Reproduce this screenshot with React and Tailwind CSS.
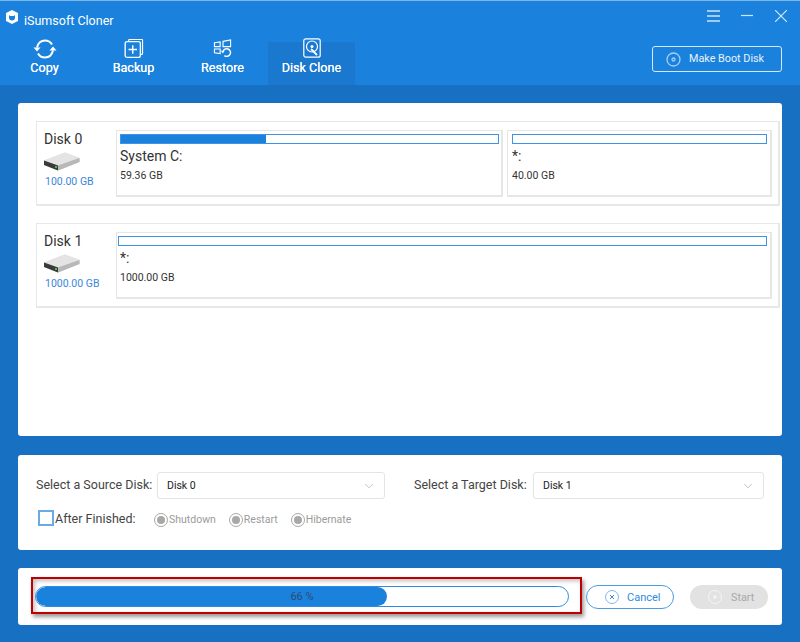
import { ChevronDown } from 'lucide-react';

function CopyIcon() {
  return (
    <svg width="24" height="20" viewBox="0 1 24 20" fill="none" stroke="white" strokeWidth="2">
      <path d="M4 9.500C5 5.500 8 2.500 12 2.500c3 0 5.500 1.400 7 4" />
      <path d="M20 12.500C19 16.500 16 19.500 12 19.500c-3 0-5.500-1.400-7-4" />
      <path d="M0.500 9.500h7l-3.500 4z" fill="white" stroke="none" />
      <path d="M23.500 12.500h-7l3.500-4z" fill="white" stroke="none" />
    </svg>
  );
}

function BackupIcon() {
  return (
    <svg width="20" height="19" viewBox="0 0 20 20" fill="none" stroke="white" strokeWidth="1.200">
      <path d="M4.500 2.500V1.200a.7.7 0 0 1 .7-.7h13a.7.7 0 0 1 .8.7v14a1 1 0 0 1-.8 1h-1" />
      <rect x="0.700" y="2.800" width="16" height="16.500" rx="2" strokeWidth="1.400" />
      <path d="M8.700 6.500v9M4.200 11h9" strokeWidth="1.500" />
    </svg>
  );
}

function RestoreIcon() {
  return (
    <svg width="20" height="18" viewBox="0 0 20 19" fill="none" stroke="white" strokeWidth="1.200">
      <path d="M1 4l6-1v5H1zM10 2.500l8-1.500v7h-8zM1 10.500h6v5l-6-1z" />
      <path d="M10 13.500a4 4 0 1 1 1.500 4" strokeWidth="1.500" />
      <path d="M7.800 12.500h4l-2 2.800z" fill="white" stroke="none" />
    </svg>
  );
}

function CloneIcon() {
  return (
    <svg width="18" height="20" viewBox="0 0 18 20" fill="none" stroke="white" strokeWidth="1.200" className="-mt-px">
      <rect x="0.800" y="0.800" width="16.400" height="18.400" rx="2" />
      <circle cx="9" cy="8.500" r="5.500" />
      <circle cx="9" cy="8.500" r="1.500" fill="white" stroke="none" />
      <path d="M8 11l6 6" strokeWidth="1.800" />
    </svg>
  );
}

function DriveIcon() {
  return (
    <svg width="36" height="19" viewBox="0 0 36 19">
      <path d="M0 8.500L21 0.500 35.500 6 35.500 10 14 18.500 0 13z" fill="#d4d4d4" />
      <path d="M0 8.500L21 0.500 35.500 6 14 13.500z" fill="#e4e4e4" />
      <path d="M0 8.500L14 13.500V18.500L0 13z" fill="#3a3a3a" />
      <path d="M14 13.500L35.500 6V10L14 18.500z" fill="#b8b8b8" />
      <rect x="11" y="14" width="2" height="2" fill="#35c64a" />
    </svg>
  );
}

function Bar({ fill, className }) {
  return (
    <div className={`h-[10px] border border-[#3d94e4] bg-white ${className}`}>
      {fill && <div className="h-full bg-[#1a82dd]" style={{ width: `${fill}%` }} />}
    </div>
  );
}

function Partition({ name, size, fill, className, barClass = '' }) {
  return (
    <div className={`h-[67px] border-2 border-t border-l border-[#e6e6e6] pt-[3px] ${className}`}>
      <Bar fill={fill} className={barClass} />
      <div className="mt-[2px] h-[20px] text-[14px] leading-[20px] text-[#333]">{name}</div>
      <div className="mt-[3px] text-[10.500px] leading-[14px] text-[#333]">{size}</div>
    </div>
  );
}

function DiskRow({ name, size, children }) {
  return (
    <div className="flex h-[85px] border-2 border-t border-l border-[#e8e8e8] pl-[7px] pt-[8px] pr-[7px]">
      <div className="w-[72px] shrink-0">
        <div className="text-[14px] leading-[18px] text-[#333]">{name}</div>
        <div className="mt-[4px]"><DriveIcon /></div>
        <div className="mt-[4px] pl-px text-[10.500px] leading-[14px] text-[#3b87d9]">{size}</div>
      </div>
      <div className="flex flex-1 gap-[3px]">{children}</div>
    </div>
  );
}

function Select({ value, className }) {
  return (
    <div className={`flex h-[27px] items-center justify-between rounded-[3px] border border-[#e4e4e4] pl-[9px] pr-[8px] ${className}`}>
      <span className="pt-px text-[10.500px] text-[#222]">{value}</span>
      <ChevronDown size={14} strokeWidth={1} className="text-[#999]" />
    </div>
  );
}

function Radio({ label }) {
  return (
    <div className="flex items-center gap-[1px]">
      <span className="flex h-[14px] w-[14px] items-center justify-center rounded-full border border-[#a8a8a8]">
        <span className="h-[8px] w-[8px] rounded-full bg-[#a8a8a8]" />
      </span>
      <span className="text-[10.500px] text-[#9b9b9b]">{label}</span>
    </div>
  );
}

function Tab({ icon, label, active }) {
  return (
    <div className={`mx-px flex w-[87px] flex-col items-center ${active ? 'bg-[#1a78cf]' : ''}`}>
      <div className="-mt-[3px] flex h-[20px] items-start">{icon}</div>
      <div className="mt-px text-[12.600px] leading-[16px] text-white [text-shadow:0_0_0.4px_white]">{label}</div>
    </div>
  );
}

export default function App() {
  return (
    <div className="flex h-[642px] w-[800px] flex-col overflow-hidden bg-[#1770c2] font-['Roboto',sans-serif]">
      <header className="flex h-[85px] shrink-0 justify-between border-t border-[#7fb6ea] bg-[#1a82dd]">
        <div className="flex flex-col">
          <div className="flex h-[41px] items-start pl-[6px] pt-[9px]">
            <svg width="12" height="14" viewBox="0 0 12 14" className="shrink-0">
              <path d="M6 0l6 3v8l-6 3-6-3V3z" fill="white" />
              <path d="M3 5v2.500a3 3 0 0 0 6 0V5L8 6H4z" fill="#1a82dd" />
            </svg>
            <span className="ml-[6px] mt-[2px] text-[12.500px] leading-[18px] text-white">iSumsoft Cloner</span>
          </div>
          <nav className="flex flex-1">
            <Tab icon={<CopyIcon />} label="Copy" />
            <Tab icon={<BackupIcon />} label="Backup" />
            <Tab icon={<RestoreIcon />} label="Restore" />
            <Tab icon={<CloneIcon />} label="Disk Clone" active />
          </nav>
        </div>
        <div className="flex flex-col items-end pr-[13px]">
          <div className="flex h-[45px] items-start gap-[21px] pt-[9px]">
            <svg width="13" height="12" viewBox="0 0 13 12" stroke="#cfe5fa" strokeWidth="1.300">
              <path d="M0 1h13M0 6h13M0 11h13" />
            </svg>
            <svg width="12" height="12" viewBox="0 0 12 12" stroke="#cfe5fa" strokeWidth="1.200">
              <path d="M0 5.500h12" />
            </svg>
            <svg width="12" height="12" viewBox="0 0 12 12" stroke="#dcecfb" strokeWidth="1.100" className="ml-px">
              <path d="M0 0l12 12M12 0L0 12" />
            </svg>
          </div>
          <div className="mr-[5px] flex h-[26px] w-[130px] items-center rounded-[3px] border border-[#d6e9fb] pl-[13px]">
            <svg width="15" height="15" viewBox="0 0 15 15" fill="none" stroke="#a8cff3" strokeWidth="1.300">
              <circle cx="7.500" cy="7.500" r="6.500" />
              <circle cx="7.500" cy="7.500" r="1.500" />
            </svg>
            <span className="ml-[8px] pt-px text-[10.800px] text-[#e8f3fd]">Make Boot Disk</span>
          </div>
        </div>
      </header>

      <main className="flex flex-1 flex-col px-[18px] pt-[18px]">
        <section className="h-[333px] rounded-[3px] bg-white pl-[18px] pr-[2px] pt-[18px]">
          <DiskRow name="Disk 0" size="100.00 GB">
            <Partition className="w-[387px] pl-[3px] pr-[2px]" name="System C:" size="59.36 GB" fill={38.500} />
            <Partition className="ml-px w-[265px] pl-[4px] pr-[3px]" name="*:" size="40.00 GB" />
          </DiskRow>
          <div className="mt-[17px]">
            <DiskRow name="Disk 1" size="1000.00 GB">
              <Partition className="w-[656px] pl-[3px] pr-[3px]" barClass="ml-[-2px]" name="*:" size="1000.00 GB" />
            </DiskRow>
          </div>
        </section>

        <section className="mt-[19px] h-[95px] rounded-[3px] bg-white pl-[18px] pt-[17px]">
          <div className="flex items-center">
            <span className="-mt-px w-[121px] text-[12.500px] leading-[16px] text-[#444]">Select a Source Disk:</span>
            <Select className="w-[228px]" value="Disk 0" />
            <span className="-mt-px ml-[29px] w-[119px] text-[12.500px] leading-[16px] text-[#444]">Select a Target Disk:</span>
            <Select className="w-[231px]" value="Disk 1" />
          </div>
          <div className="mt-[11px] flex items-start pl-[2px]">
            <span className="h-[16px] w-[16px] border-2 border-[#6aaae6] bg-white" />
            <span className="ml-[1px] mt-px w-[99px] text-[12.500px] leading-[16px] text-[#444]">After Finished:</span>
            <div className="mt-[2px] flex gap-[13px]">
              <Radio label="Shutdown" />
              <Radio label="Restart" />
              <Radio label="Hibernate" />
            </div>
          </div>
        </section>

        <section className="mt-[18px] flex h-[57px] items-start rounded-[3px] bg-white pl-[13px] pt-[9px]">
          <div className="h-[37px] w-[551px] shrink-0 border-2 border-[#c00000] pl-[2px] pr-[11px] pt-[7px] shadow-[2px_3px_4px_rgba(0,0,0,0.4),inset_2px_2px_4px_rgba(0,0,0,0.25)]">
            <div className="relative h-[21px] overflow-hidden rounded-full border border-[#2d8be0] bg-white">
              <div className="h-full rounded-full bg-[#1a82dd]" style={{ width: '66%' }} />
              <span className="absolute inset-0 flex items-center justify-center pt-[2px] text-[11px] text-[#2c4a75]">66 %</span>
            </div>
          </div>
          <div className="ml-[4px] mt-[-1px] flex items-start gap-[16px] pt-[9px]">
            <button className="flex h-[24px] w-[88px] items-center rounded-full border border-[#4a9ce6] pl-[18px]">
              <svg width="14" height="14" viewBox="0 0 14 14" fill="none" stroke="#7fb8ec" strokeWidth="1">
                <circle cx="7" cy="7" r="6.500" />
                <path d="M5 5l4 4M9 5l-4 4" stroke="#3b87d9" />
              </svg>
              <span className="ml-[8px] pt-[2px] text-[11px] text-[#2d8be0]">Cancel</span>
            </button>
            <button className="flex h-[24px] w-[78px] items-center rounded-full bg-[#e2e2e2] pl-[18px]">
              <svg width="14" height="14" viewBox="0 0 14 14" fill="none" stroke="#f4f4f4" strokeWidth="1">
                <circle cx="7" cy="7" r="6.500" />
                <path d="M5.500 4.500L9.500 7l-4 2.500z" fill="#f4f4f4" stroke="none" />
              </svg>
              <span className="ml-[9px] pt-[2px] text-[10.800px] text-[#a8a8a8]">Start</span>
            </button>
          </div>
        </section>
      </main>
    </div>
  );
}
